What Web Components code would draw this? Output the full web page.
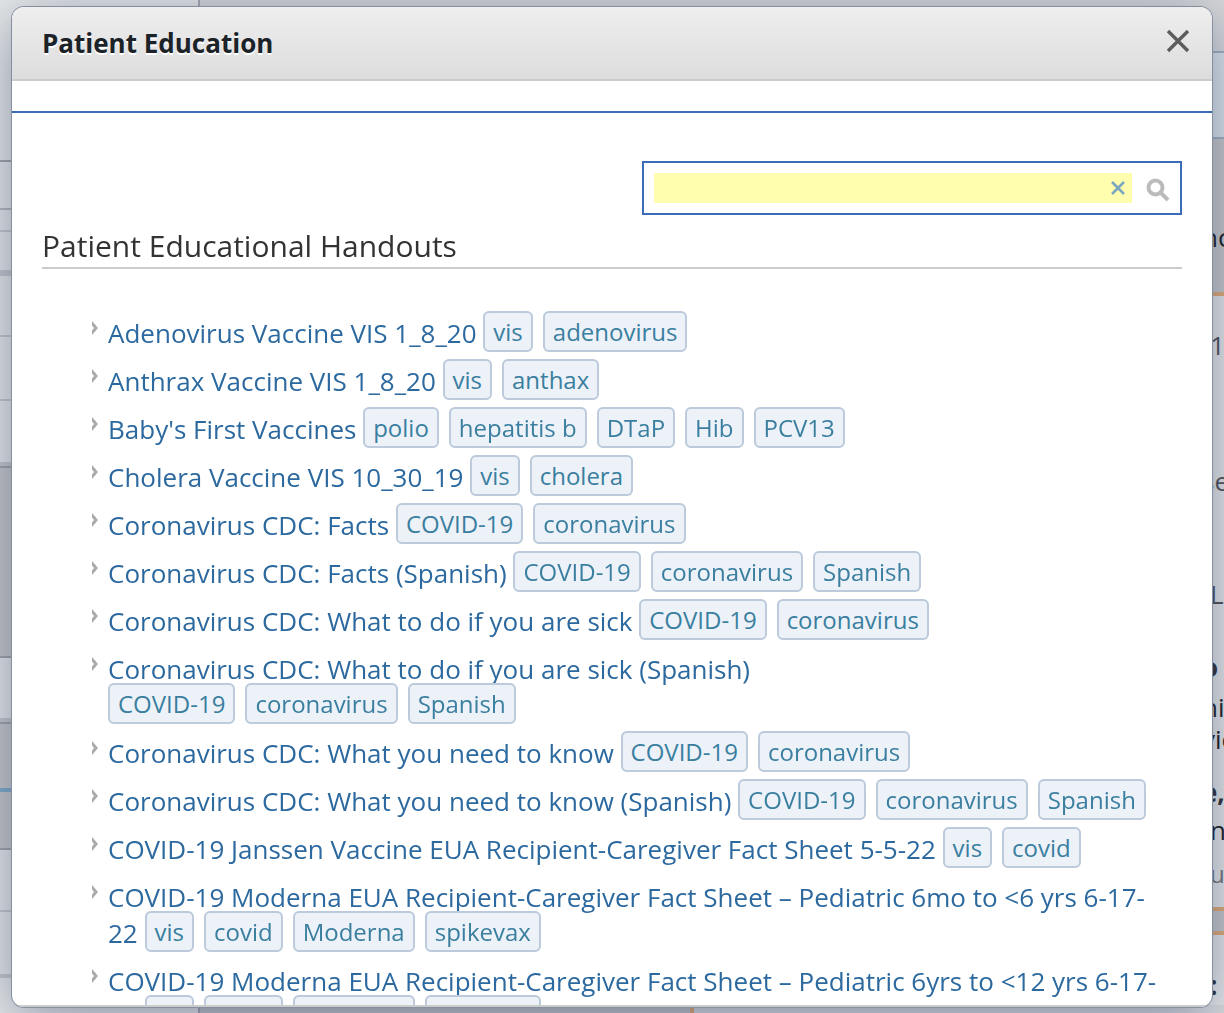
<!DOCTYPE html>
<html lang="en">
<head>
<meta charset="utf-8">
<title>Patient Education</title>
<style>
  html, body {
    height: 100%;
  }

  body {
    margin: 0;
    overflow: hidden;
    font-family: "Open Sans", "Noto Sans", sans-serif;
    color: #333;
  }
</style>
</head>
<body>
<chart-backdrop></chart-backdrop>
<modal-dialog label="Patient Education">
  <search-box></search-box>
  <handout-list label="Patient Educational Handouts"></handout-list>
</modal-dialog>

<script>
/**
 * @name ChartBackdrop
 * @description Dimmed chart page that lies behind the dialog
 */
class ChartBackdrop extends HTMLElement {

  constructor() {
    super();

    // [height, class] of each band in the left navigation
    const nav = [
      [160, ''], [2, 'line'], [46, ''], [2, 'soft'], [20, ''], [2, 'faint'], [38, ''], [6, 'faint'],
      [59, ''], [2, 'faint'], [62, ''], [2, 'faint'], [61, ''], [4, 'faint'], [2, 'line'],
      [188, 'dark'], [2, 'line'], [60, ''], [4, 'faint'], [2, 'line'],
      [64, 'dark'], [4, 'blue'], [56, 'dark'], [2, 'line'], [60, ''], [2, 'faint'], [62, ''], [4, 'faint']
    ];

    // [height, class, text] of each band in the right summary
    const summary = [
      [51, 'head', ''], [2, 'rule', ''], [84, 'tint', ''], [2, 'rule', ''],
      [78, 'dark', ''], [40, 'dark strong', 'nc'], [35, 'dark', ''], [4, 'orange', ''],
      [29, '', ''], [40, 'in', '1'], [96, '', ''], [40, '', 'se'], [73, '', ''], [40, 'in', 'L'],
      [33, '', ''], [40, 'strong bold', 'o'], [4, '', ''], [32, 'strong', 'his'], [32, 'strong', 'vic'], [18, '', ''],
      [38, 'strong bold', 'e,'], [38, 'strong in', 'n'], [4, '', ''], [40, 'small in', 'u'], [14, '', ''],
      [4, 'orange', ''], [20, 'dark', ''], [4, 'orange', ''], [30, '', ''], [40, 'bold in', ':']
    ];

    this.attachShadow({ mode: 'open' });
    this.shadowRoot.innerHTML = `
      <style>
        :host {
          display: grid;
          grid-template-columns: 198px 2px minmax(0, 490px) 4px 1fr;
          height: 100vh;
          overflow: hidden;
          background: #e9ebea;
          font-size: 26px;
          color: #555;
        }

        .edge { background: #aaabb0; }
        .main { background: linear-gradient(#d9dadb 500px, #c6c7ca 500px); }
        .accent { background: linear-gradient(#d9dadb 500px, #e6ae78 500px); }
        .summary { background: linear-gradient(#d9dadb 500px, #dcdfe0 500px); }
        .summary div { overflow: hidden; display: flex; align-items: center; justify-content: flex-end; }
        .summary span { width: 22px; white-space: nowrap; }
        .summary .in span { width: 14px; }

        .summary div { background: #e9ebea; }
        .summary .head { background: #d9dadb; }
        .summary .tint { background: #dfe6ec; }
        .summary .rule { background: #a5b3bc; }
        .nav .dark, .summary .dark { background: #cacbcb; }
        .nav .line { background: #a5a7a9; }
        .nav .soft { background: #b9bbbd; }
        .nav .faint { background: #c8cacd; }
        .nav .blue { background: #83aecb; }
        .summary .orange { background: #e6ae78; }

        .strong { color: #222; }
        .bold { font-weight: 700; color: #333; }
        .small { font-size: 24px; color: #777; }
      </style>
      <div class="nav">${nav.map(([h, name]) => `<div class="${name}" style="height:${h}px"></div>`).join('')}</div>
      <div class="edge"></div>
      <div class="main"></div>
      <div class="accent"></div>
      <div class="summary">${summary.map(([h, name, text]) => `<div class="${name}" style="height:${h}px"><span>${text}</span></div>`).join('')}</div>
    `;
  }
}

/**
 * @name ModalDialog
 * @example <modal-dialog label="Title">content</modal-dialog>
 * @param {string} label - title in the header bar
 */
class ModalDialog extends HTMLElement {

  constructor() {
    super();

    this.attachShadow({ mode: 'open' });
    this.shadowRoot.innerHTML = `
      <style>
        :host {
          position: fixed;
          inset: 7px 12px 6px;
          display: flex;
          flex-direction: column;
          overflow: hidden;
          background: #fff;
          border-radius: 12px;
          box-shadow: 0 0 0 1px #8490a0, 0 10px 60px rgba(30, 45, 90, 0.5);
        }

        header {
          display: flex;
          align-items: center;
          justify-content: space-between;
          height: 72px;
          flex: none;
          padding: 0 22px 0 30px;
          background: linear-gradient(#eee, #ddd);
          border-bottom: 2px solid #ccc;
        }

        h1 {
          margin: 0;
          font-size: 26px;
          line-height: 36px;
          color: #1b2228;
          text-shadow: 0 2px 0 #fff;
        }

        button {
          display: flex;
          padding: 0 0 4px;
          border: 0;
          background: none;
          cursor: pointer;
        }

        .bar {
          height: 30px;
          flex: none;
          border-bottom: 2px solid #3a6db5;
        }

        main {
          flex: 1;
          min-height: 0;
          overflow: hidden;
          padding: 48px 30px 0;
        }

        footer {
          height: 2px;
          flex: none;
          background: #ccc;
        }
      </style>
      <header>
        <h1></h1>
        <button type="button" aria-label="Close">
          <svg width="24" height="24" viewBox="0 0 24 24" fill="none" stroke="#5c5c5c" stroke-width="3.400">
            <path d="M2 2L22 22M22 2L2 22"/>
          </svg>
        </button>
      </header>
      <div class="bar"></div>
      <main><slot></slot></main>
      <footer></footer>
    `;
  }

  connectedCallback() {
    const label = this.getAttribute('label');
    this.setAttribute('role', 'dialog');
    this.setAttribute('aria-label', label);
    this.shadowRoot.querySelector('h1').textContent = label;
    this.shadowRoot.querySelector('button').addEventListener('click', () => this.remove());
  }
}

/**
 * @name SearchBox
 * @description Search field with a clear button and a submit button
 */
class SearchBox extends HTMLElement {

  constructor() {
    super();

    this.attachShadow({ mode: 'open' });
    this.shadowRoot.innerHTML = `
      <style>
        :host {
          display: flex;
          justify-content: flex-end;
        }

        form {
          display: flex;
          align-items: center;
          box-sizing: border-box;
          width: 540px;
          max-width: 100%;
          padding: 10px;
          border: 2px solid #3a6db5;
        }

        .field {
          display: flex;
          align-items: center;
          flex: 1;
          height: 30px;
          padding-right: 6px;
          background: #fffdae;
        }

        input {
          flex: 1;
          min-width: 0;
          padding: 0 4px;
          border: 0;
          outline: 0;
          background: none;
          font: inherit;
          font-size: 24px;
          line-height: 30px;
        }

        button {
          display: flex;
          padding: 0;
          border: 0;
          background: none;
          cursor: pointer;
        }

        .go {
          margin: 4px 0 0 14px;
        }
      </style>
      <form role="search">
        <div class="field">
          <input type="text" aria-label="Search handouts">
          <button class="clear" type="reset" aria-label="Clear">
            <svg width="16" height="16" viewBox="0 0 16 16" fill="none" stroke="#7ba7bf" stroke-width="2.600">
              <path d="M2 2L14 14M14 2L2 14"/>
            </svg>
          </button>
        </div>
        <button class="go" type="submit" aria-label="Search">
          <svg width="24" height="24" viewBox="0 0 24 24" fill="none" stroke="#bbb" stroke-width="4">
            <circle cx="9.500" cy="9.500" r="7"/>
            <path d="M14.500 14.500L22 22"/>
          </svg>
        </button>
      </form>
    `;
    this.shadowRoot.querySelector('form').addEventListener('submit', (e) => e.preventDefault());
  }
}

/**
 * @name TagLink
 * @example <tag-link>vis</tag-link>
 */
class TagLink extends HTMLElement {

  constructor() {
    super();

    // no white space around the link, it would widen the gap between tags
    this.attachShadow({ mode: 'open' });
    this.shadowRoot.innerHTML = `<style>
        :host {
          display: inline;
          margin-right: 10px;
        }

        a {
          position: relative;
          bottom: 2px;
          padding: 2px 8px;
          border: 2px solid #bccadb;
          border-radius: 6px;
          background: #edf2f9;
          color: #3a7f9f;
          font-size: 24px;
          line-height: 32px;
          text-decoration: none;
        }
      </style><a href="#"><slot></slot></a>`;
  }
}

/**
 * @name HandoutList
 * @param {string} label - heading over the list
 */
class HandoutList extends HTMLElement {

  constructor() {
    super();

    this.handouts = [
      ['Adenovirus Vaccine VIS 1_8_20', 'vis', 'adenovirus'],
      ['Anthrax Vaccine VIS 1_8_20', 'vis', 'anthax'],
      ["Baby's First Vaccines", 'polio', 'hepatitis b', 'DTaP', 'Hib', 'PCV13'],
      ['Cholera Vaccine VIS 10_30_19', 'vis', 'cholera'],
      ['Coronavirus CDC: Facts', 'COVID-19', 'coronavirus'],
      ['Coronavirus CDC: Facts (Spanish)', 'COVID-19', 'coronavirus', 'Spanish'],
      ['Coronavirus CDC: What to do if you are sick', 'COVID-19', 'coronavirus'],
      ['Coronavirus CDC: What to do if you are sick (Spanish)', 'COVID-19', 'coronavirus', 'Spanish'],
      ['Coronavirus CDC: What you need to know', 'COVID-19', 'coronavirus'],
      ['Coronavirus CDC: What you need to know (Spanish)', 'COVID-19', 'coronavirus', 'Spanish'],
      ['COVID-19 Janssen Vaccine EUA Recipient-Caregiver Fact Sheet 5-5-22', 'vis', 'covid'],
      ['COVID-19 Moderna EUA Recipient-Caregiver Fact Sheet – Pediatric 6mo to &lt;6 yrs 6-17-22', 'vis', 'covid', 'Moderna', 'spikevax'],
      ['COVID-19 Moderna EUA Recipient-Caregiver Fact Sheet – Pediatric 6yrs to &lt;12 yrs 6-17-22', 'vis', 'covid', 'Moderna', 'spikevax']
    ];

    this.attachShadow({ mode: 'open' });
    this.shadowRoot.innerHTML = `
      <style>
        :host {
          display: block;
        }

        h2 {
          margin: 11px 0 46px;
          padding-bottom: 1px;
          border-bottom: 2px solid #ccc;
          font-size: 30px;
          font-weight: 400;
          line-height: 40px;
        }

        ul {
          margin: 0;
          padding: 0 20px 0 50px;
          list-style: none;
        }

        li {
          display: flex;
          align-items: flex-start;
          gap: 10px;
          margin-bottom: 12px;
        }

        svg {
          flex: none;
          margin-top: 6px;
        }

        p {
          margin: 0;
          font-size: 26px;
          line-height: 36px;
        }

        .title {
          color: #2c699f;
          text-decoration: none;
        }

        .tags {
          white-space: nowrap;
        }
      </style>
      <h2></h2>
      <ul>${this.handouts.map((item) => this.renderItem(item)).join('')}</ul>
    `;
  }

  renderItem([title, ...tags]) {
    return `
      <li>
        <svg width="6" height="14" viewBox="0 0 6 14" fill="none" stroke="#aaa" stroke-width="3">
          <path d="M-1 1L4 7L-1 13"/>
        </svg>
        <p><a class="title" href="#">${title}</a> <span class="tags">${tags.map((tag) => `<tag-link>${tag}</tag-link>`).join('')}</span></p>
      </li>`;
  }

  connectedCallback() {
    this.shadowRoot.querySelector('h2').textContent = this.getAttribute('label');
  }
}

// register components
customElements.define('chart-backdrop', ChartBackdrop);
customElements.define('modal-dialog', ModalDialog);
customElements.define('search-box', SearchBox);
customElements.define('tag-link', TagLink);
customElements.define('handout-list', HandoutList);
</script>
</body>
</html>
